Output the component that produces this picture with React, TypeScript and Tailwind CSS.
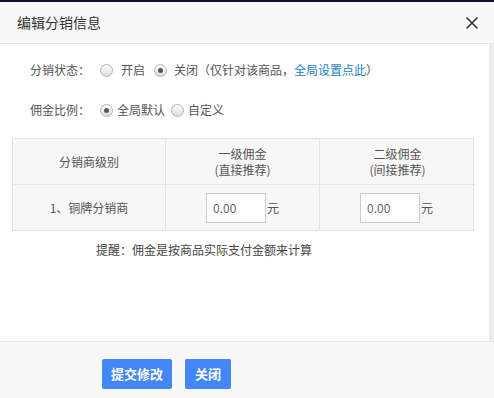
import React from "react";

function Radio({ checked }: { checked?: boolean }) {
  return (
    <span className="inline-flex h-[13px] w-[13px] shrink-0 items-center justify-center rounded-full border border-[#b4b4b4] bg-gradient-to-b from-[#ffffff] to-[#dcdcdc]">
      {checked ? <span className="h-[5px] w-[5px] rounded-full bg-[#555]" /> : null}
    </span>
  );
}

export default function App() {
  return (
    <div
      className="flex h-[398px] w-[494px] flex-col overflow-hidden bg-white text-[12px] text-[#555]"
      style={{ fontFamily: '"Noto Sans CJK SC", "Noto Sans", sans-serif' }}
    >
      <div className="h-[2px] bg-[#1d0b2b]" />
      <div className="flex h-[42px] items-center justify-between border-b border-[#e5e5e5] bg-[#f8f8f8] pl-[17px] pr-[15px]">
        <span className="text-[14px] text-[#333]">编辑分销信息</span>
        <svg width="14" height="14" viewBox="0 0 14 14" className="mt-[1px]">
          <path d="M1.5 1.5 L12.5 12.5 M12.5 1.5 L1.5 12.5" stroke="#333" strokeWidth="1.6" />
        </svg>
      </div>
      <div className="flex flex-1">
        <div className="flex-1 pt-[16px]">
          <div className="flex h-[20px] items-center pl-[30px]">
            <span className="w-[70px]">分销状态：</span>
            <Radio />
            <span className="ml-[8px] mr-[9px]">开启</span>
            <Radio checked />
            <span className="ml-[7px]">
              关闭（仅针对该商品，<span className="text-[#1a7fc1]">全局设置点此</span>）
            </span>
          </div>
          <div className="mt-[20px] flex h-[20px] items-center pl-[30px]">
            <span className="w-[70px]">佣金比例：</span>
            <Radio checked />
            <span className="ml-[4px] mr-[6px]">全局默认</span>
            <Radio />
            <span className="ml-[4px]">自定义</span>
          </div>
          <div className="ml-[12px] mt-[18px] w-[462px]">
            <div className="grid grid-cols-[153px_154px_155px] border border-[#e3e3e3] bg-[#f7f7f7]">
              <div className="flex h-[46px] items-center justify-center border-r border-b border-[#e3e3e3]">分销商级别</div>
              <div className="flex h-[46px] flex-col items-center justify-center border-r border-b border-[#e3e3e3] leading-[16px]">
                <span>一级佣金</span>
                <span>(直接推荐)</span>
              </div>
              <div className="flex h-[46px] flex-col items-center justify-center border-b border-[#e3e3e3] leading-[16px]">
                <span>二级佣金</span>
                <span>(间接推荐)</span>
              </div>
              <div className="flex h-[45px] items-center justify-center border-r border-[#e3e3e3]">1、铜牌分销商</div>
              <div className="flex h-[45px] items-center border-r border-[#e3e3e3] pl-[40px]">
                <div className="flex h-[30px] w-[60px] items-center border border-[#ccc] bg-white pl-[6px] text-[#666]">0.00</div>
                <span className="ml-[1px]">元</span>
              </div>
              <div className="flex h-[45px] items-center pl-[40px]">
                <div className="flex h-[30px] w-[60px] items-center border border-[#ccc] bg-white pl-[6px] text-[#666]">0.00</div>
                <span className="ml-[1px]">元</span>
              </div>
            </div>
          </div>
          <div className="mt-[9px] h-[20px] pl-[96px] leading-[20px] text-[#444]">提醒：佣金是按商品实际支付金额来计算</div>
        </div>
        <div className="w-[5px] bg-[#ececec]" />
      </div>
      <div className="flex h-[57px] gap-[13px] border-t border-[#e5e5e5] bg-[#f8f8f8] pl-[102px] pt-[17px]">
        <button className="h-[30px] w-[70px] rounded-[2px] bg-[#4287f5] text-[13px] font-bold text-white">提交修改</button>
        <button className="h-[30px] w-[46px] rounded-[2px] bg-[#4287f5] text-[13px] font-bold text-white">关闭</button>
      </div>
    </div>
  );
}
